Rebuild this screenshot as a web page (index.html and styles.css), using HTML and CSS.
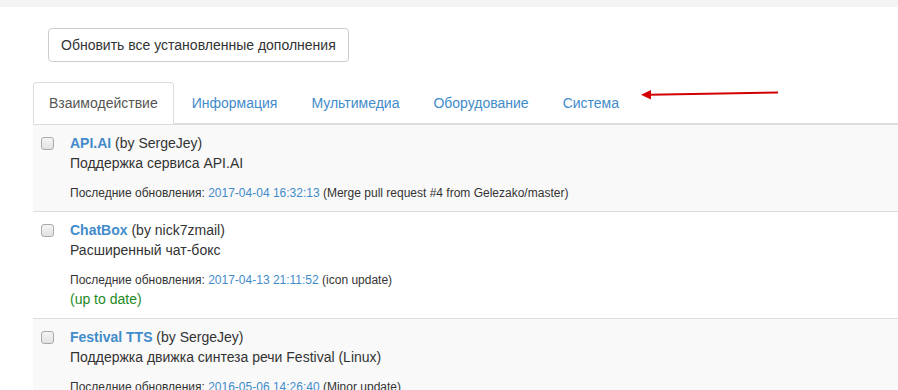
FILE: index.html
```html
<!DOCTYPE html>
<html lang="ru">
<head>
  <meta charset="UTF-8">
  <meta name="viewport" content="width=device-width, initial-scale=1">
  <title>Дополнения</title>
  <link rel="stylesheet" href="styles.css">
</head>
<body>

  <div class="topbar"></div>

  <main class="page">
    <div class="actions">
      <button class="btn">Обновить все установленные дополнения</button>
    </div>

    <!-- категории дополнений -->
    <ul class="tabs">
      <li class="active"><a href="#">Взаимодействие</a></li>
      <li><a href="#">Информация</a></li>
      <li><a href="#">Мультимедиа</a></li>
      <li><a href="#">Оборудование</a></li>
      <li><a href="#">Система</a></li>
    </ul>

    <!-- список дополнений -->
    <div class="plugins">
      <div class="plugin">
        <input type="checkbox" class="plugin-check">
        <div class="plugin-body">
          <div><a class="plugin-name" href="#">API.AI</a> (by SergeJey)</div>
          <div>Поддержка сервиса API.AI</div>
          <div class="plugin-updated">Последние обновления: <a href="#">2017-04-04 16:32:13</a> (Merge pull request #4 from Gelezako/master)</div>
        </div>
      </div>
      <div class="plugin">
        <input type="checkbox" class="plugin-check">
        <div class="plugin-body">
          <div><a class="plugin-name" href="#">ChatBox</a> (by nick7zmail)</div>
          <div>Расширенный чат-бокс</div>
          <div class="plugin-updated">Последние обновления: <a href="#">2017-04-13 21:11:52</a> (icon update)</div>
          <div class="uptodate">(up to date)</div>
        </div>
      </div>
      <div class="plugin">
        <input type="checkbox" class="plugin-check">
        <div class="plugin-body">
          <div><a class="plugin-name" href="#">Festival TTS</a> (by SergeJey)</div>
          <div>Поддержка движка синтеза речи Festival (Linux)</div>
          <div class="plugin-updated">Последние обновления: <a href="#">2016-05-06 14:26:40</a> (Minor update)</div>
        </div>
      </div>
    </div>
  </main>

  <!-- стрелка-пометка -->
  <svg class="arrow" width="898" height="390" viewBox="0 0 898 390">
    <line x1="649" y1="94.7" x2="778" y2="92.6" stroke="#d20000" stroke-width="2"/>
    <polygon points="641,94.8 651,90 651,99.6" fill="#d20000"/>
  </svg>

</body>
</html>
```

FILE: styles.css
```css
/* общие стили */
body {
  margin: 0;
  font-family: 'Liberation Sans', Arial, sans-serif;
  font-size: 14px;
  line-height: 20px;
  color: #333;
  background: #fff;
}
a {
  color: #428bca;
  text-decoration: none;
}
.topbar {
  height: 7px;
  background: #f4f4f4;
}
.page {
  margin-left: 33px;
}
/* кнопка обновления */
.actions {
  padding: 21px 0 20px 15px;
}
.btn {
  font-family: inherit;
  font-size: 14px;
  line-height: 20px;
  color: #333;
  background: #fff;
  border: 1px solid #ccc;
  border-radius: 4px;
  padding: 6px 12px;
  margin: 0;
  cursor: pointer;
}
/* вкладки */
.tabs {
  display: flex;
  list-style: none;
  margin: 0;
  padding: 0;
  border-bottom: 1px solid #ddd;
}
.tabs li {
  margin-bottom: -1px;
  margin-right: 2px;
}
.tabs a {
  display: block;
  padding: 10px 15px;
  border: 1px solid transparent;
  border-radius: 4px 4px 0 0;
}
.tabs .active a {
  color: #555;
  background: #fff;
  border-color: #ddd;
  border-bottom-color: transparent;
}
/* список дополнений */
.plugins {
  border-top: 1px solid #ddd;
}
.plugin {
  display: flex;
  padding: 8px 8px 9px;
  border-bottom: 1px solid #ddd;
}
.plugin:nth-child(odd) {
  background: #f9f9f9;
}
.plugin-check {
  appearance: none;
  width: 13px;
  height: 13px;
  margin: 4px 16px 0 0;
  border: 1px solid #a9a9a9;
  border-radius: 3px;
  background: linear-gradient(#f4f4f4, #e2e2e2);
  flex-shrink: 0;
}
.plugin-name {
  font-weight: bold;
}
.plugin-updated {
  margin-top: 11px;
  font-size: 12px;
  line-height: 18px;
}
.uptodate {
  color: #1f8a1f;
}
/* пометка */
.arrow {
  position: absolute;
  left: 0;
  top: 0;
  pointer-events: none;
}
```
